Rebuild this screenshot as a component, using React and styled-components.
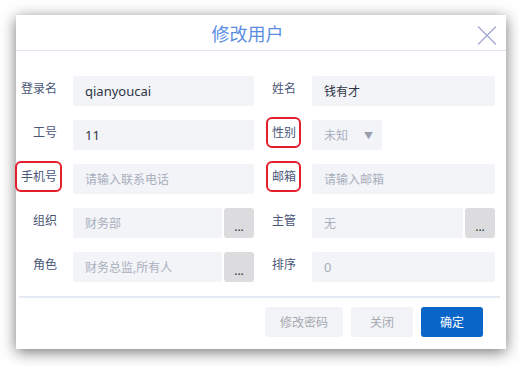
import React from 'react';
import styled, { createGlobalStyle } from 'styled-components';

const GlobalStyle = createGlobalStyle`
  body {
    margin: 0;
    background: #fff;
    font-family: "Noto Sans", "Noto Sans CJK SC", sans-serif;
  }
`;

const Page = styled.div`
  padding: 15px 13px 18px 16px;
`;

const Dialog = styled.div`
  width: 490px;
  background: #fff;
  box-shadow: 0 3px 14px rgba(0, 0, 0, 0.55);
`;

const Header = styled.div`
  position: relative;
  height: 35px;
  border-bottom: 1px solid #dde5ef;
  display: flex;
  align-items: center;
  justify-content: center;
  padding-right: 27px;
`;

const Title = styled.h3`
  margin: 0;
  font-size: 18px;
  font-weight: normal;
  color: #5a8de2;
`;

const Close = styled.button`
  position: absolute;
  right: 9px;
  top: 11px;
  width: 20px;
  height: 19px;
  padding: 0;
  border: 0;
  background: none;
  display: flex;
`;

const Body = styled.div`
  display: grid;
  grid-template-columns: 238px 241px;
  row-gap: 14px;
  padding: 25px 11px 14px 0;
`;

const Field = styled.div`
  display: grid;
  grid-template-columns: ${p => p.$labelWidth}px 1fr;
  column-gap: 16px;
`;

const Label = styled.label`
  text-align: right;
  font-size: 12px;
  line-height: 25px;
  color: #4a5676;
`;

const Mark = styled.span`
  position: relative;
  ${p => p.$marked && `
    &::after {
      content: "";
      position: absolute;
      inset: -7px -5px -7px -6px;
      border: 2px solid #e41e2b;
      border-radius: 6px;
    }
  `}
`;

const Control = styled.div`
  display: flex;
  gap: 2px;
  width: ${p => (p.$width ? `${p.$width}px` : 'auto')};
`;

const Input = styled.div`
  flex: 1;
  height: 30px;
  box-sizing: border-box;
  background: #f3f4f8;
  border-radius: 2px;
  padding-left: 12px;
  display: flex;
  align-items: center;
  justify-content: space-between;
  font-size: 12px;
  color: ${p => (p.$muted ? '#a9afbd' : '#2e3445')};
`;

const Value = styled.span`
  font-size: ${p => (p.$latin ? '13px' : '12px')};
`;

const Arrow = styled.span`
  font-size: 9px;
  color: #9a9ea8;
  margin-right: 9px;
`;

const More = styled.button`
  width: 30px;
  height: 30px;
  border: 0;
  border-radius: 3px;
  background: #dcdcdf;
  color: #333;
  font-size: 12px;
  padding: 6px 0 0;
  font-family: inherit;
`;

const Footer = styled.div`
  margin: 0 6px 0 3px;
  border-top: 2px solid #e4e9f2;
  padding: 9px 17px 12px;
  display: flex;
  justify-content: flex-end;
  gap: 8px;
`;

const Button = styled.button`
  height: 30px;
  width: ${p => p.$width}px;
  border: 0;
  border-radius: 3px;
  font-family: inherit;
  font-size: 12px;
  background: ${p => (p.$primary ? '#0a65c9' : '#f2f3f7')};
  color: ${p => (p.$primary ? '#fff' : '#a7a9b0')};
`;

const fields = [
  { label: '登录名', value: 'qianyoucai', latin: true },
  { label: '姓名', value: '钱有才' },
  { label: '工号', value: '11', latin: true },
  { label: '性别', value: '未知', muted: true, select: true, marked: true },
  { label: '手机号', value: '请输入联系电话', muted: true, marked: true },
  { label: '邮箱', value: '请输入邮箱', muted: true, marked: true },
  { label: '组织', value: '财务部', muted: true, more: true },
  { label: '主管', value: '无', muted: true, more: true },
  { label: '角色', value: '财务总监,所有人', muted: true, more: true },
  { label: '排序', value: '0', muted: true, latin: true },
];

const App = () => (
  <Page>
    <GlobalStyle />
    <Dialog>
      <Header>
        <Title>修改用户</Title>
        <Close aria-label="关闭">
          <svg width="20" height="19" viewBox="0 0 20 19">
            <path d="M1 0.5 L19 18.5 M19 0.5 L1 18.5" stroke="#a6aad4" strokeWidth="1.4" />
          </svg>
        </Close>
      </Header>
      <Body>
        {fields.map((f, i) => (
          <Field key={f.label} $labelWidth={i % 2 === 0 ? 41 : 42}>
            <Label>
              <Mark $marked={f.marked}>{f.label}</Mark>
            </Label>
            <Control $width={f.select ? 70 : null}>
              <Input $muted={f.muted}>
                <Value $latin={f.latin}>{f.value}</Value>
                {f.select && <Arrow>▼</Arrow>}
              </Input>
              {f.more && <More>...</More>}
            </Control>
          </Field>
        ))}
      </Body>
      <Footer>
        <Button $width={78}>修改密码</Button>
        <Button $width={62}>关闭</Button>
        <Button $width={62} $primary>确定</Button>
      </Footer>
    </Dialog>
  </Page>
);

export default App;
